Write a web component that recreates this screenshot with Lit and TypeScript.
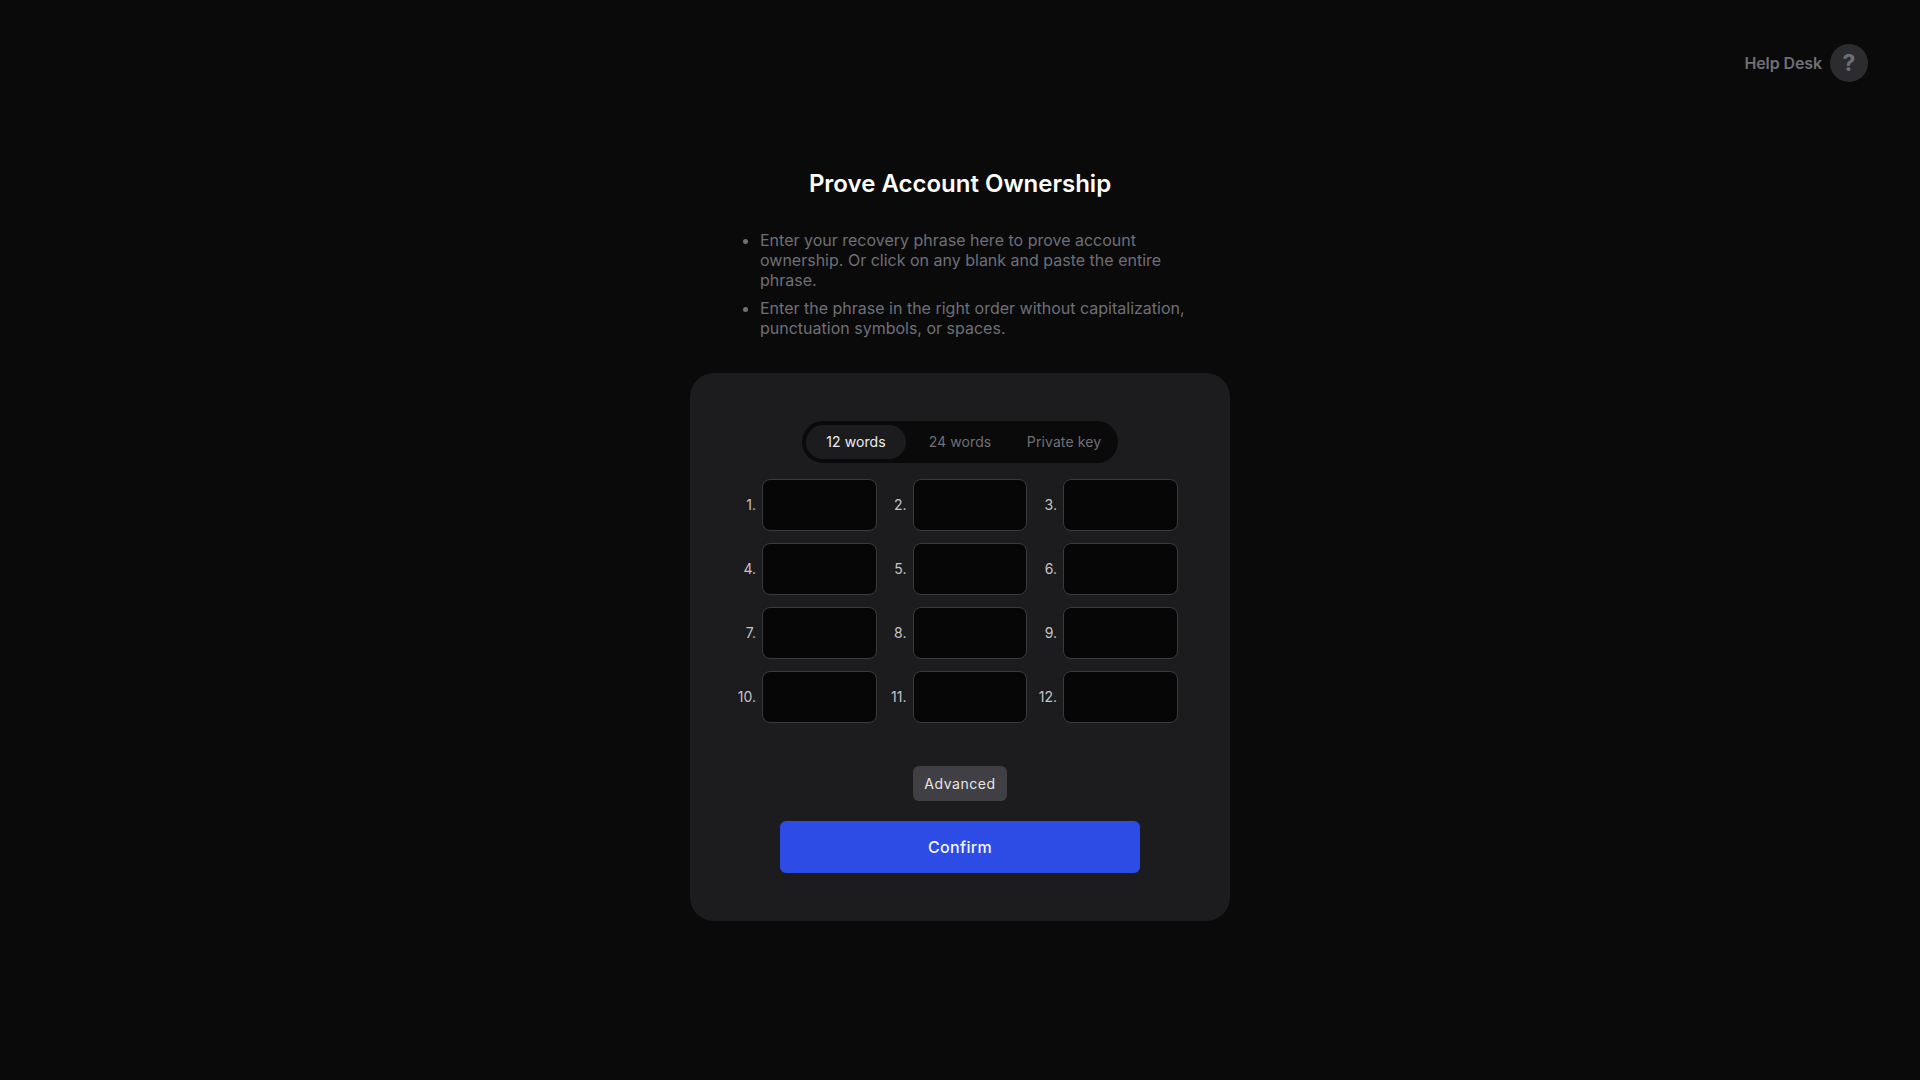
import { LitElement, html, css } from "lit";
import { customElement } from "lit/decorators.js";

@customElement("app-root")
export class AppRoot extends LitElement {
  static styles = css`
    :host {
      display: block;
      height: 1080px;
      overflow: hidden;
      background: #0a0a0b;
      font-family: Inter, "Liberation Sans", sans-serif;
      color: #fff;
    }
    .top {
      display: flex;
      justify-content: flex-end;
      align-items: center;
      gap: 8px;
      padding: 44px 52px 0 0;
      height: 38px;
    }
    .help-text {
      font-size: 16px;
      font-weight: 600;
      line-height: 20px;
      letter-spacing: -0.1px;
      color: #6f6f77;
    }
    .help-icon {
      width: 38px;
      height: 38px;
      border-radius: 50%;
      background: #2c2c30;
      color: #6f6f77;
      font-size: 23px;
      font-weight: 700;
      display: flex;
      align-items: center;
      justify-content: center;
    }
    main {
      width: 540px;
      margin: 0 auto;
      display: flex;
      flex-direction: column;
    }
    h1 {
      margin: 84px 0 0;
      font-size: 24px;
      line-height: 36px;
      font-weight: 600;
      text-align: center;
      color: #fff;
    }
    ul {
      margin: 28px 0 0;
      padding: 0 0 0 70px;
      width: 505px;
      box-sizing: border-box;
      list-style: disc;
      font-size: 16px;
      line-height: 20px;
      color: #6f6f77;
    }
    li + li {
      margin-top: 8px;
    }
    .card {
      margin-top: 35px;
      box-sizing: border-box;
      height: 548px;
      padding: 48px 0;
      border-radius: 24px;
      background: #1c1c1f;
      display: flex;
      flex-direction: column;
      align-items: center;
    }
    .tabs {
      display: flex;
      gap: 4px;
      padding: 4px;
      height: 34px;
      border-radius: 21px;
      background: #0a0a0b;
    }
    .tab {
      width: 100px;
      border-radius: 17px;
      display: flex;
      align-items: center;
      justify-content: center;
      font-size: 14px;
      font-weight: 400;
      letter-spacing: 0.1px;
      color: #6f6f77;
    }
    .tab.active {
      background: #1c1c1f;
      color: #ededef;
    }
    .grid {
      align-self: flex-start;
      margin: 16px 0 0 42px;
      display: grid;
      grid-template-columns: repeat(3, 144.5px);
      column-gap: 6px;
      row-gap: 12px;
    }
    .cell {
      display: flex;
      align-items: center;
      gap: 6px;
    }
    .num {
      flex: 1;
      text-align: right;
      font-size: 14px;
      color: #c4c4c9;
    }
    .field {
      width: 114.5px;
      height: 52px;
      box-sizing: border-box;
      border: 1px solid #3a3a3e;
      border-radius: 8px;
      background: #060607;
    }
    .advanced {
      margin-top: 43px;
      height: 36px;
      width: 94px;
      border-radius: 6px;
      background: #404044;
      color: #e6e6e8;
      font-size: 14px;
      font-weight: 400;
      letter-spacing: 0.55px;
      display: flex;
      align-items: center;
      justify-content: center;
    }
    .confirm {
      margin-top: 20px;
      width: 360px;
      height: 52px;
      border-radius: 6px;
      background: #2d4ce6;
      color: #f4f5fe;
      font-size: 16px;
      font-weight: 500;
      letter-spacing: 0.35px;
      display: flex;
      align-items: center;
      justify-content: center;
    }
  `;

  render() {
    const nums = Array.from({ length: 12 }, (_, i) => i + 1);
    return html`
      <div class="top">
        <span class="help-text">Help Desk</span>
        <span class="help-icon">?</span>
      </div>
      <main>
        <h1>Prove Account Ownership</h1>
        <ul>
          <li>Enter your recovery phrase here to prove account ownership. Or click on any blank and paste the entire phrase.</li>
          <li>Enter the phrase in the right order without capitalization, punctuation symbols, or spaces.</li>
        </ul>
        <section class="card">
          <div class="tabs">
            <div class="tab active">12 words</div>
            <div class="tab">24 words</div>
            <div class="tab">Private key</div>
          </div>
          <div class="grid">
            ${nums.map(
              (n) => html`<div class="cell"><span class="num">${n}.</span><div class="field"></div></div>`
            )}
          </div>
          <div class="advanced">Advanced</div>
          <div class="confirm">Confirm</div>
        </section>
      </main>
    `;
  }
}
